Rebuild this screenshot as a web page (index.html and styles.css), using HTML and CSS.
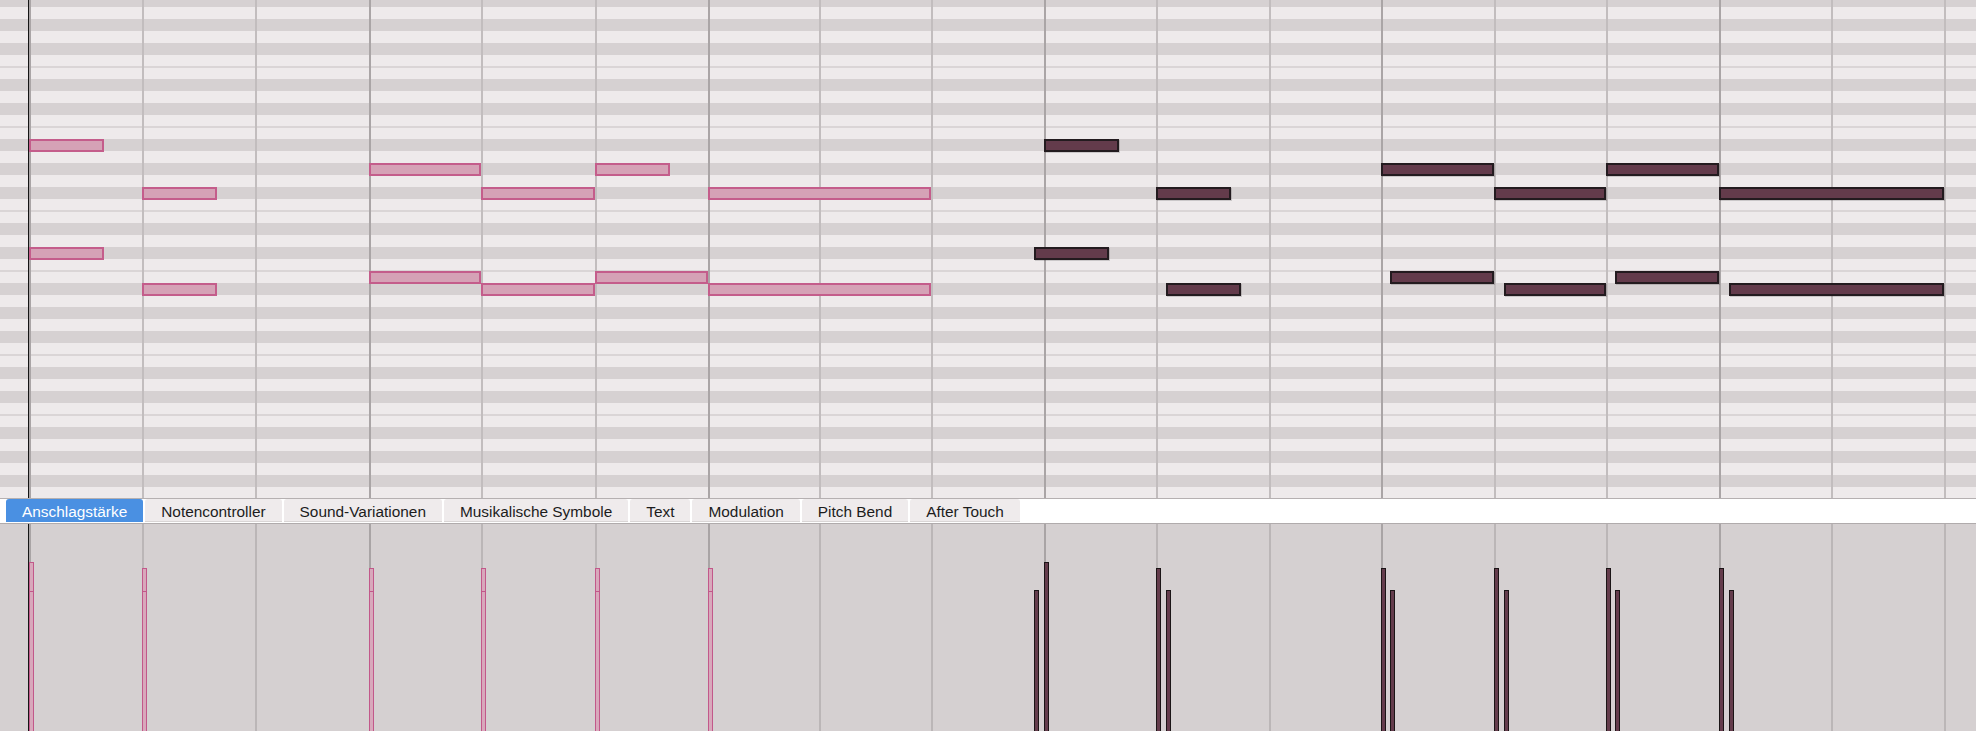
FILE: index.html
```html
<!DOCTYPE html>
<html lang="de">
<head>
    <meta charset="UTF-8">
    <meta name="viewport" content="width=device-width, initial-scale=1.0">
    <title>Pianorolle</title>
    <link rel="stylesheet" href="styles.css">
</head>
<body>

    <div class="editor">
        <!-- Notenraster -->
        <div class="roll" id="roll">
            <div class="cursor"></div>
        </div>

        <!-- Controller-Reiter -->
        <nav class="tabs">
            <span class="tab active">Anschlagstärke</span>
            <span class="tab">Notencontroller</span>
            <span class="tab">Sound-Variationen</span>
            <span class="tab">Musikalische Symbole</span>
            <span class="tab">Text</span>
            <span class="tab">Modulation</span>
            <span class="tab">Pitch Bend</span>
            <span class="tab">After Touch</span>
        </nav>

        <!-- Anschlagstärke-Spur -->
        <div class="lane" id="lane">
            <div class="cursor"></div>
        </div>
    </div>

    <script>
        // Position der Taktschläge (linke Kante der Linie)
        const beats = [29, 142, 255, 369, 481, 595, 708, 819, 931, 1044, 1156, 1269, 1381, 1494, 1606, 1719, 1831, 1944];

        // [Zeile, Start, Ende, Versatz Start, Versatz Ende, Anschlag]
        const pinkNotes = [
            [11, 0, 2/3, 0, 0, 38],
            [20, 0, 2/3, 0, 0, 67],
            [15, 1, 5/3, 0, 0, 44],
            [23, 1, 5/3, 0, 0, 67],
            [13, 3, 4, 0, 0, 44],
            [22, 3, 4, 0, 0, 67],
            [15, 4, 5, 0, 0, 44],
            [23, 4, 5, 0, 0, 67],
            [13, 5, 17/3, 0, 0, 44],
            [22, 5, 6, 0, 0, 67],
            [15, 6, 8, 0, 0, 44],
            [23, 6, 8, 0, 0, 67]
        ];

        const darkNotes = [
            [11, 9, 29/3, 0, 0, 38],
            [20, 9, 29/3, -10, -10, 66],
            [15, 10, 32/3, 0, 0, 44],
            [23, 10, 32/3, 10, 10, 66],
            [13, 12, 13, 0, 0, 44],
            [22, 12, 13, 9, 0, 66],
            [15, 13, 14, 0, 0, 44],
            [23, 13, 14, 10, 0, 66],
            [13, 14, 15, 0, 0, 44],
            [22, 14, 15, 9, 0, 66],
            [15, 15, 17, 0, 0, 44],
            [23, 15, 17, 10, 0, 66]
        ];

        function beatX(b) {
            const i = Math.floor(b);
            if (i >= beats.length - 1) return beats[beats.length - 1];
            return beats[i] + (b - i) * (beats[i + 1] - beats[i]);
        }

        function addBeats(container) {
            beats.forEach((b, i) => {
                const col = document.createElement('div');
                col.className = i % 3 === 0 ? 'beat bar' : 'beat';
                container.insertBefore(col, container.querySelector('.cursor'));
            });
        }

        function addNotes(list, kind) {
            const roll = document.getElementById('roll');
            const lane = document.getElementById('lane');
            list.forEach(n => {
                const left = Math.round(beatX(n[1]) + n[3]);
                const right = Math.round(beatX(n[2]) + n[4]);

                const note = document.createElement('div');
                note.className = 'note ' + kind;
                note.style.left = left + 'px';
                note.style.top = (7 + 12 * n[0]) + 'px';
                note.style.width = (right - left) + 'px';
                roll.appendChild(note);

                const vel = document.createElement('div');
                vel.className = 'vel ' + kind;
                vel.style.left = left + 'px';
                vel.style.top = n[5] + 'px';
                lane.appendChild(vel);
            });
        }

        addBeats(document.getElementById('roll'));
        addBeats(document.getElementById('lane'));
        addNotes(pinkNotes, 'pink');
        addNotes(darkNotes, 'dark');
    </script>
</body>
</html>
```

FILE: styles.css
```css
* {
    box-sizing: border-box;
}
body {
    margin: 0;
    background-color: #fff;
    font-family: "Liberation Sans", Arial, sans-serif;
    overflow: hidden;
}
.editor {
    width: 1976px;
    height: 731px;
    display: flex;
    flex-direction: column;
}

/* Raster mit Taktlinien */
.roll,
.lane {
    position: relative;
    display: grid;
    grid-template-columns: 113px 113px 114px 112px 114px 113px 111px 112px 113px 112px 113px 112px 113px 112px 113px 112px 113px 1fr;
    padding-left: 29px;
    overflow: hidden;
    flex-shrink: 0;
}
.roll {
    height: 499px;
    border-bottom: 1px solid #b5b0b1;
    background: linear-gradient(to bottom,
        #eeeaeb 0 12px, #d6d1d2 12px 24px, #eeeaeb 24px 36px, #d6d1d2 36px 48px,
        #eeeaeb 48px 59px, #dad5d6 59px 61px, #eeeaeb 61px 72px, #d6d1d2 72px 84px,
        #eeeaeb 84px 96px, #d6d1d2 96px 108px, #eeeaeb 108px 119px, #dad5d6 119px 121px,
        #eeeaeb 121px 132px, #d6d1d2 132px 144px) 0 7px / 100% 144px repeat-y;
}
.beat {
    border-left: 2px solid #c2bdbe;
}
.beat.bar {
    border-left-color: #aaa5a6;
}
.lane {
    flex: 1;
    background-color: #d5d0d1;
}
.lane .beat {
    border-left-color: #bbb6b7;
}
.lane .beat.bar {
    border-left-color: #a9a4a5;
}
.cursor {
    position: absolute;
    left: 28px;
    top: 0;
    bottom: 0;
    width: 1px;
    background-color: #151515;
}

/* Noten */
.note {
    position: absolute;
    height: 13px;
    border: 2px solid #c45d8b;
    background-color: #d5a2b6;
}
.note.dark {
    border-color: #231b1f;
    background-color: #633b4b;
    box-shadow: 1px 1px 0 rgba(0, 0, 0, 0.15);
}

/* Anschlagsbalken */
.vel {
    position: absolute;
    bottom: -2px;
    width: 5px;
    border: 1px solid #c2588a;
    background-color: #d8a8bb;
}
.vel.dark {
    border-color: #1b1416;
    background-color: #643c4c;
}

/* Reiter */
.tabs {
    height: 25px;
    display: flex;
    gap: 2px;
    padding: 0 0 1px 6px;
    border-bottom: 1px solid #b0abac;
    background-color: #fff;
    flex-shrink: 0;
}
.tab {
    height: 23px;
    padding: 1px 16px 0;
    line-height: 24px;
    font-size: 15.4px;
    color: #1c1c1c;
    background-color: #efebec;
    border-radius: 3px 3px 0 0;
    box-shadow: inset 0 -1px #d9d5d5;
    white-space: nowrap;
}
.tab.active {
    background-color: #4a90e2;
    color: #fff;
    box-shadow: none;
}
```
